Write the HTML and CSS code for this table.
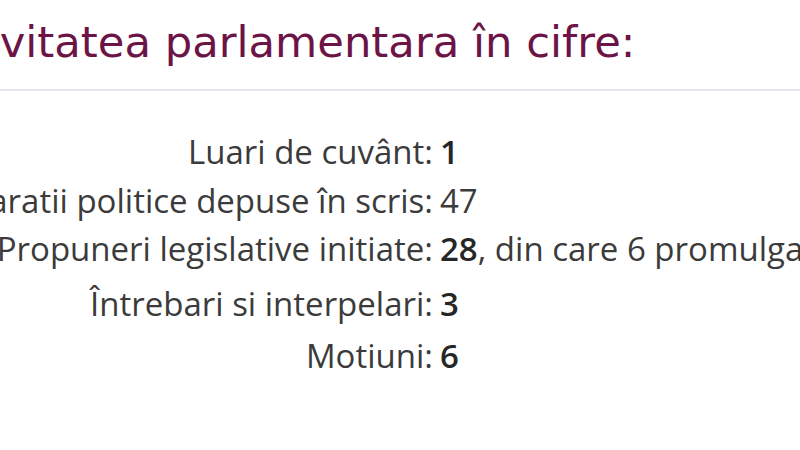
FILE: index.html
```html
<!DOCTYPE html>
<html lang="ro">
<head>
<meta charset="utf-8">
<title>Activitatea parlamentara în cifre</title>
<link rel="stylesheet" href="styles.css">
</head>
<body>
<div class="page">
  <header class="head">
    <h2 class="title">Activitatea parlamentara în cifre:</h2>
  </header>
  <section class="stats">
    <div class="label">Luari de cuvânt:</div>
    <div class="value"><b>1</b></div>
    <div class="label">Declaratii politice depuse în scris:</div>
    <div class="value">47</div>
    <div class="label">Propuneri legislative initiate:</div>
    <div class="value"><b>28</b>, din care 6 promulgate</div>
    <div class="label">Întrebari si interpelari:</div>
    <div class="value"><b>3</b></div>
    <div class="label">Motiuni:</div>
    <div class="value"><b>6</b></div>
  </section>
</div>
</body>
</html>
```

FILE: styles.css
```css
html, body {
  margin: 0;
  padding: 0;
  background: #ffffff;
  overflow: hidden;
}

.page {
  width: 800px;
  height: 450px;
  overflow: hidden;
}

.head {
  padding-top: 12px;
  padding-bottom: 17px;
  border-bottom: 2px solid #e7e7f1;
}

.title {
  margin: 0 0 0 -82px;
  font-family: "DejaVu Sans", Verdana, sans-serif;
  font-weight: normal;
  font-size: 43.3px;
  line-height: 60px;
  color: #6c1446;
  white-space: nowrap;
}

.stats {
  display: grid;
  grid-template-columns: 633px auto;
  grid-template-rows: 49px 48px 55px 52px 48px;
  column-gap: 7px;
  margin: 37px 0 0 -200px;
  font-family: "Open Sans", "Noto Sans", sans-serif;
  font-size: 33px;
  line-height: 48px;
  color: #3b3b3b;
}

.label {
  text-align: right;
  white-space: nowrap;
}

.value {
  white-space: nowrap;
}

.value b {
  font-weight: 600;
  color: #262626;
}
```
